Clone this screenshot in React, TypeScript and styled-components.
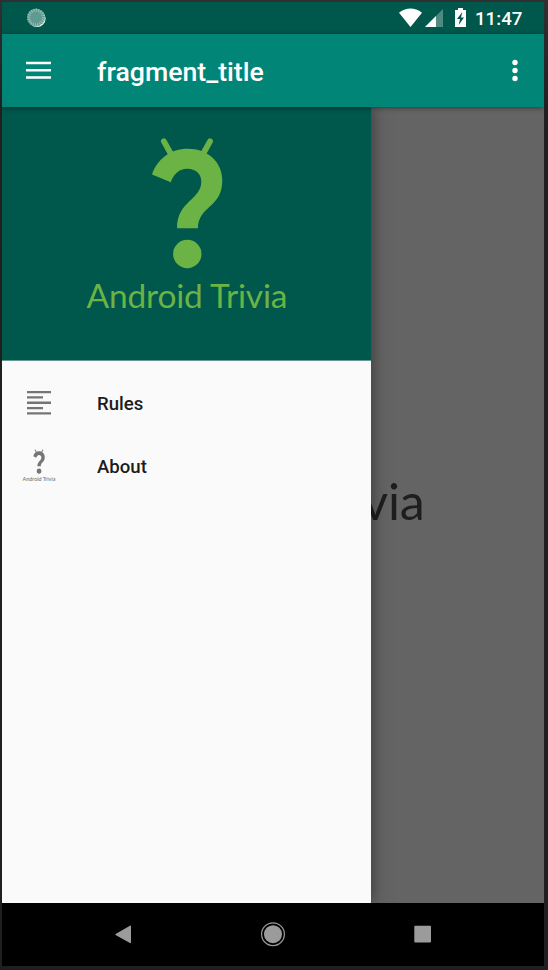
import React from "react";
import styled, { createGlobalStyle } from "styled-components";

const GlobalStyle = createGlobalStyle`
  * { box-sizing: border-box; }
  body { margin: 0; background: #1f1f20; font-family: Roboto, sans-serif; }
`;

const Frame = styled.div`
  width: 548px;
  height: 970px;
  padding: 2px 4px 4px 2px;
  background: linear-gradient(#303030, #202021 110px, #1f1f20);
`;

const Screen = styled.div`
  height: 964px;
  display: flex;
  flex-direction: column;
  overflow: hidden;
`;

const StatusBar = styled.header`
  height: 32px;
  flex: none;
  display: flex;
  align-items: center;
  padding: 0 21px 0 24px;
  background: #00574b;
  color: #fff;
`;

const StatusIcons = styled.div`
  margin-left: auto;
  display: flex;
  align-items: center;
`;

const Clock = styled.span`
  width: 48px;
  margin-left: 8px;
  padding-top: 2px;
  font-size: 18.7px;
  font-weight: 500;
  line-height: 22px;
  white-space: nowrap;
`;

const Toolbar = styled.div`
  position: relative;
  z-index: 2;
  height: 73px;
  flex: none;
  display: flex;
  align-items: center;
  padding: 0 17px 0 24px;
  background: #008577;
  color: #fff;
  box-shadow: 0 1px 5px rgba(0, 0, 0, 0.45);
`;

const IconButton = styled.button`
  display: flex;
  padding: 0;
  border: 0;
  background: none;
  color: inherit;
`;

const Title = styled.h1`
  flex: 1;
  margin: 2px 0 0 43px;
  font-size: 26.7px;
  font-weight: 500;
  line-height: 32px;
`;

const Body = styled.main`
  position: relative;
  flex: 1;
  overflow: hidden;
  background: #646464;
`;

const Backdrop = styled.div`
  height: 100%;
  display: flex;
  justify-content: center;
  padding: 156px 0 0 2px;
`;

const Drawer = styled.aside`
  position: absolute;
  inset: 0 auto 0 0;
  width: 369px;
  background: #fafafa;
  box-shadow: 0 0 16px rgba(0, 0, 0, 0.5);
`;

const DrawerHeader = styled.div`
  height: 254px;
  display: flex;
  justify-content: center;
  padding: 29px 0 0 1px;
  background: #00574b;
  border-bottom: 1px solid #65988f;
`;

const Menu = styled.nav`
  padding-top: 11px;
`;

const MenuItem = styled.a`
  height: 63px;
  display: flex;
  align-items: center;
  color: #1d1d1d;
  font-size: 18.6px;
  font-weight: 500;
`;

const IconSlot = styled.span`
  width: 74px;
  margin: -2px 21px 0 0;
  display: flex;
  justify-content: center;
`;

const NavBar = styled.footer`
  height: 63px;
  flex: none;
  display: flex;
  align-items: center;
  justify-content: center;
  gap: 122px;
  background: #000;
  color: #9b9b9b;
`;

const Wordmark = styled.text`
  font-family: Lato, sans-serif;
  font-size: 33.5px;
`;

interface LogoProps {
  width: number;
  height: number;
  color: string;
}

function Logo({ width, height, color }: LogoProps) {
  return (
    <svg width={width} height={height} viewBox="83 136 208 182" preserveAspectRatio="none" fill={color}>
      <path d="M163.9 141.4 171.5 155M210 141.4 202.5 155" fill="none" stroke={color} strokeWidth="5.8" strokeLinecap="round" />
      <path d="M152 174.6C157 159 171 148.7 187.5 148.7C208 148.7 222.3 162 222.3 180.5C222.3 208 198 206 198 228.2H177C177 201 201.3 200 201.3 181.5C201.3 173.5 195.5 168.7 187.3 168.7C179.3 168.7 173.5 174 170.8 182.2Z" />
      <circle cx="187.3" cy="254" r="14.2" />
      <Wordmark x="86.5" y="307.5" textLength="201" lengthAdjust="spacing">Android Trivia</Wordmark>
    </svg>
  );
}

function SyncIcon() {
  return (
    <svg width="20" height="20" viewBox="0 0 20 20">
      <circle cx="11" cy="10.5" r="8.6" fill="#fff" />
      <circle cx="10" cy="9.5" r="9" fill="#609b91" />
      <circle cx="10" cy="9.5" r="7.4" fill="none" stroke="#9cc2bb" strokeWidth="3" strokeDasharray="1 1.3" />
    </svg>
  );
}

function SignalIcons() {
  return (
    <svg width="69" height="22" viewBox="398 7 69 22" fill="#fff">
      <path d="M399 12.8Q410.5 4.4 422 12.8L410.5 27Z" />
      <path d="M443 9V27H425Z" fill="#4f897f" />
      <path d="M436 16V27H425Z" />
      <path d="M458 8H463V10H466V27H455V10H458Z" />
      <path d="M462.3 12 457 19H460L458.7 25 464 17.5H461Z" fill="#00574b" />
    </svg>
  );
}

export default function App() {
  return (
    <>
      <GlobalStyle />
      <Frame>
        <Screen>
          <StatusBar>
            <SyncIcon />
            <StatusIcons>
              <SignalIcons />
              <Clock>11:47</Clock>
            </StatusIcons>
          </StatusBar>
          <Toolbar>
            <IconButton aria-label="Close menu">
              <svg width="28" height="22" viewBox="0 0.7 28 22" fill="#fff">
                <path d="M0 2.5H25V5H0ZM0 9.8H25V12.3H0ZM0 17H25V19.5H0Z" />
              </svg>
            </IconButton>
            <Title>fragment_title</Title>
            <IconButton aria-label="More options">
              <svg width="24" height="24" viewBox="0 0.5 24 24" fill="#fff">
                <circle cx="12" cy="4" r="2.7" />
                <circle cx="12" cy="12" r="2.7" />
                <circle cx="12" cy="20" r="2.7" />
              </svg>
            </IconButton>
          </Toolbar>
          <Body>
            <Backdrop>
              <Logo width={312} height={273} color="#1e1e1e" />
            </Backdrop>
            <Drawer>
              <DrawerHeader>
                <Logo width={208} height={182} color="#6ab344" />
              </DrawerHeader>
              <Menu>
                <MenuItem>
                  <IconSlot>
                    <svg width="24" height="26" viewBox="0 0 24 26" fill="#757575">
                      <path d="M0 1H24V3.3H0ZM0 6.2H16V8.5H0ZM0 11.5H24V14H0ZM0 17H16V19.3H0ZM0 22.3H24V24.5H0Z" />
                    </svg>
                  </IconSlot>
                  Rules
                </MenuItem>
                <MenuItem>
                  <IconSlot>
                    <Logo width={34} height={34} color="#757575" />
                  </IconSlot>
                  About
                </MenuItem>
              </Menu>
            </Drawer>
          </Body>
          <NavBar>
            <IconButton aria-label="Back">
              <svg width="28" height="28" viewBox="0 0.5 28 28" fill="currentColor">
                <path d="M7 13.2 20.5 5.4Q22 4.5 22 6V21.8Q22 23.2 20.5 22.3L7 14.8Q5.3 14 7 13.2Z" />
              </svg>
            </IconButton>
            <IconButton aria-label="Home">
              <svg width="28" height="28" viewBox="0 0.3 28 28" fill="currentColor">
                <circle cx="14" cy="13.5" r="9" />
                <circle cx="14" cy="13.5" r="11.4" fill="none" stroke="currentColor" strokeWidth="1.2" />
              </svg>
            </IconButton>
            <IconButton aria-label="Recent apps">
              <svg width="28" height="28" viewBox="0 0.5 28 28" fill="currentColor">
                <rect x="5.3" y="5.3" width="16.7" height="16.7" rx="1" />
              </svg>
            </IconButton>
          </NavBar>
        </Screen>
      </Frame>
    </>
  );
}
